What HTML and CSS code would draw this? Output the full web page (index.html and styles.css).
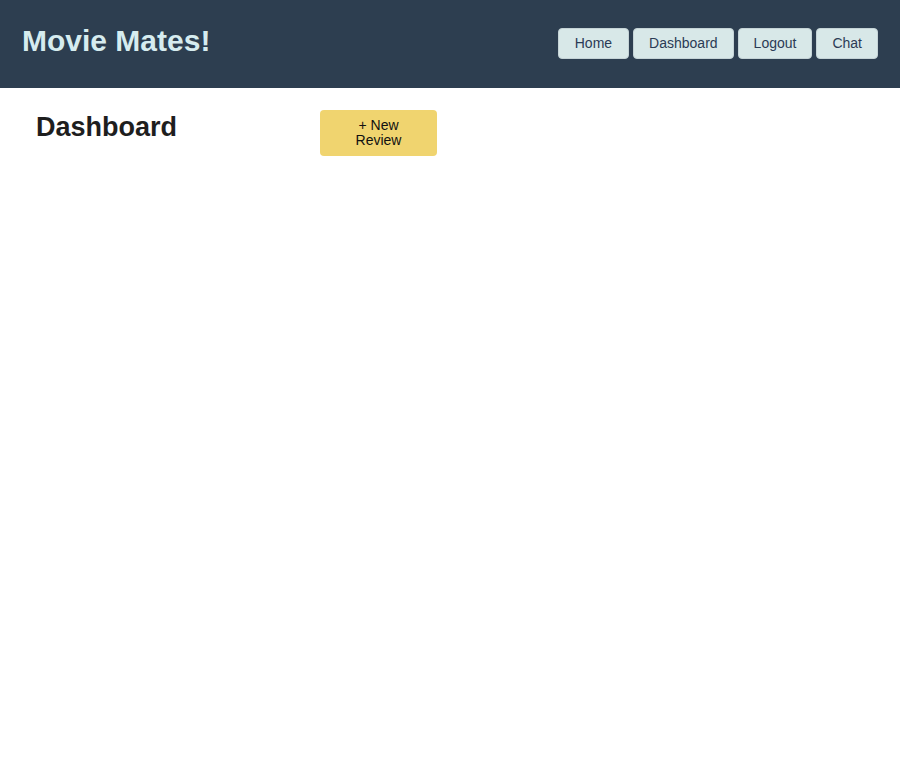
FILE: index.html
```html
<!DOCTYPE html>
<html>
<head>
<meta charset="utf-8">
<link rel="stylesheet" href="styles.css">
</head>
<body>
<header class="topbar">
  <h1 class="brand">Movie Mates!</h1>
  <nav class="nav">
    <button class="nav-btn nav-home">Home</button>
    <button class="nav-btn">Dashboard</button>
    <button class="nav-btn">Logout</button>
    <button class="nav-btn">Chat</button>
  </nav>
</header>
<main class="content">
  <h2 class="page-title">Dashboard</h2>
  <button class="new-btn">+ New Review</button>
</main>
</body>
</html>
```
FILE: styles.css
```css
html, body {
  margin: 0;
  padding: 0;
  background: #ffffff;
  font-family: "Liberation Sans", Arial, sans-serif;
}
.topbar {
  height: 88px;
  background: #2d3e50;
  display: flex;
  align-items: flex-start;
  justify-content: space-between;
  padding: 0 22px;
  box-sizing: border-box;
}
.brand {
  margin: 22px 0 0;
  font-size: 30px;
  font-weight: bold;
  color: #d6ecef;
  line-height: 38px;
}
.nav {
  display: flex;
  gap: 4px;
  margin-top: 28px;
}
.nav-btn {
  height: 31px;
  padding: 0 15px 1px;
  border: 1px solid #c5d3d6;
  border-radius: 4px;
  background: #d8e8e8;
  color: #2b3b55;
  font-family: "Liberation Sans", Arial, sans-serif;
  font-size: 14px;
}
.nav-home {
  padding: 0 16px 1px;
}
.content {
  display: flex;
  align-items: flex-start;
  padding: 22px 36px;
}
.page-title {
  margin: 1px 0 0;
  width: 284px;
  font-size: 27px;
  font-weight: bold;
  color: #1e1e1e;
  line-height: 32px;
}
.new-btn {
  width: 117px;
  height: 46px;
  padding: 0 26px 1px;
  border: none;
  border-radius: 4px;
  background: #f0d46f;
  color: #111;
  font-family: "Liberation Sans", Arial, sans-serif;
  font-size: 14px;
  line-height: 15px;
}
```
